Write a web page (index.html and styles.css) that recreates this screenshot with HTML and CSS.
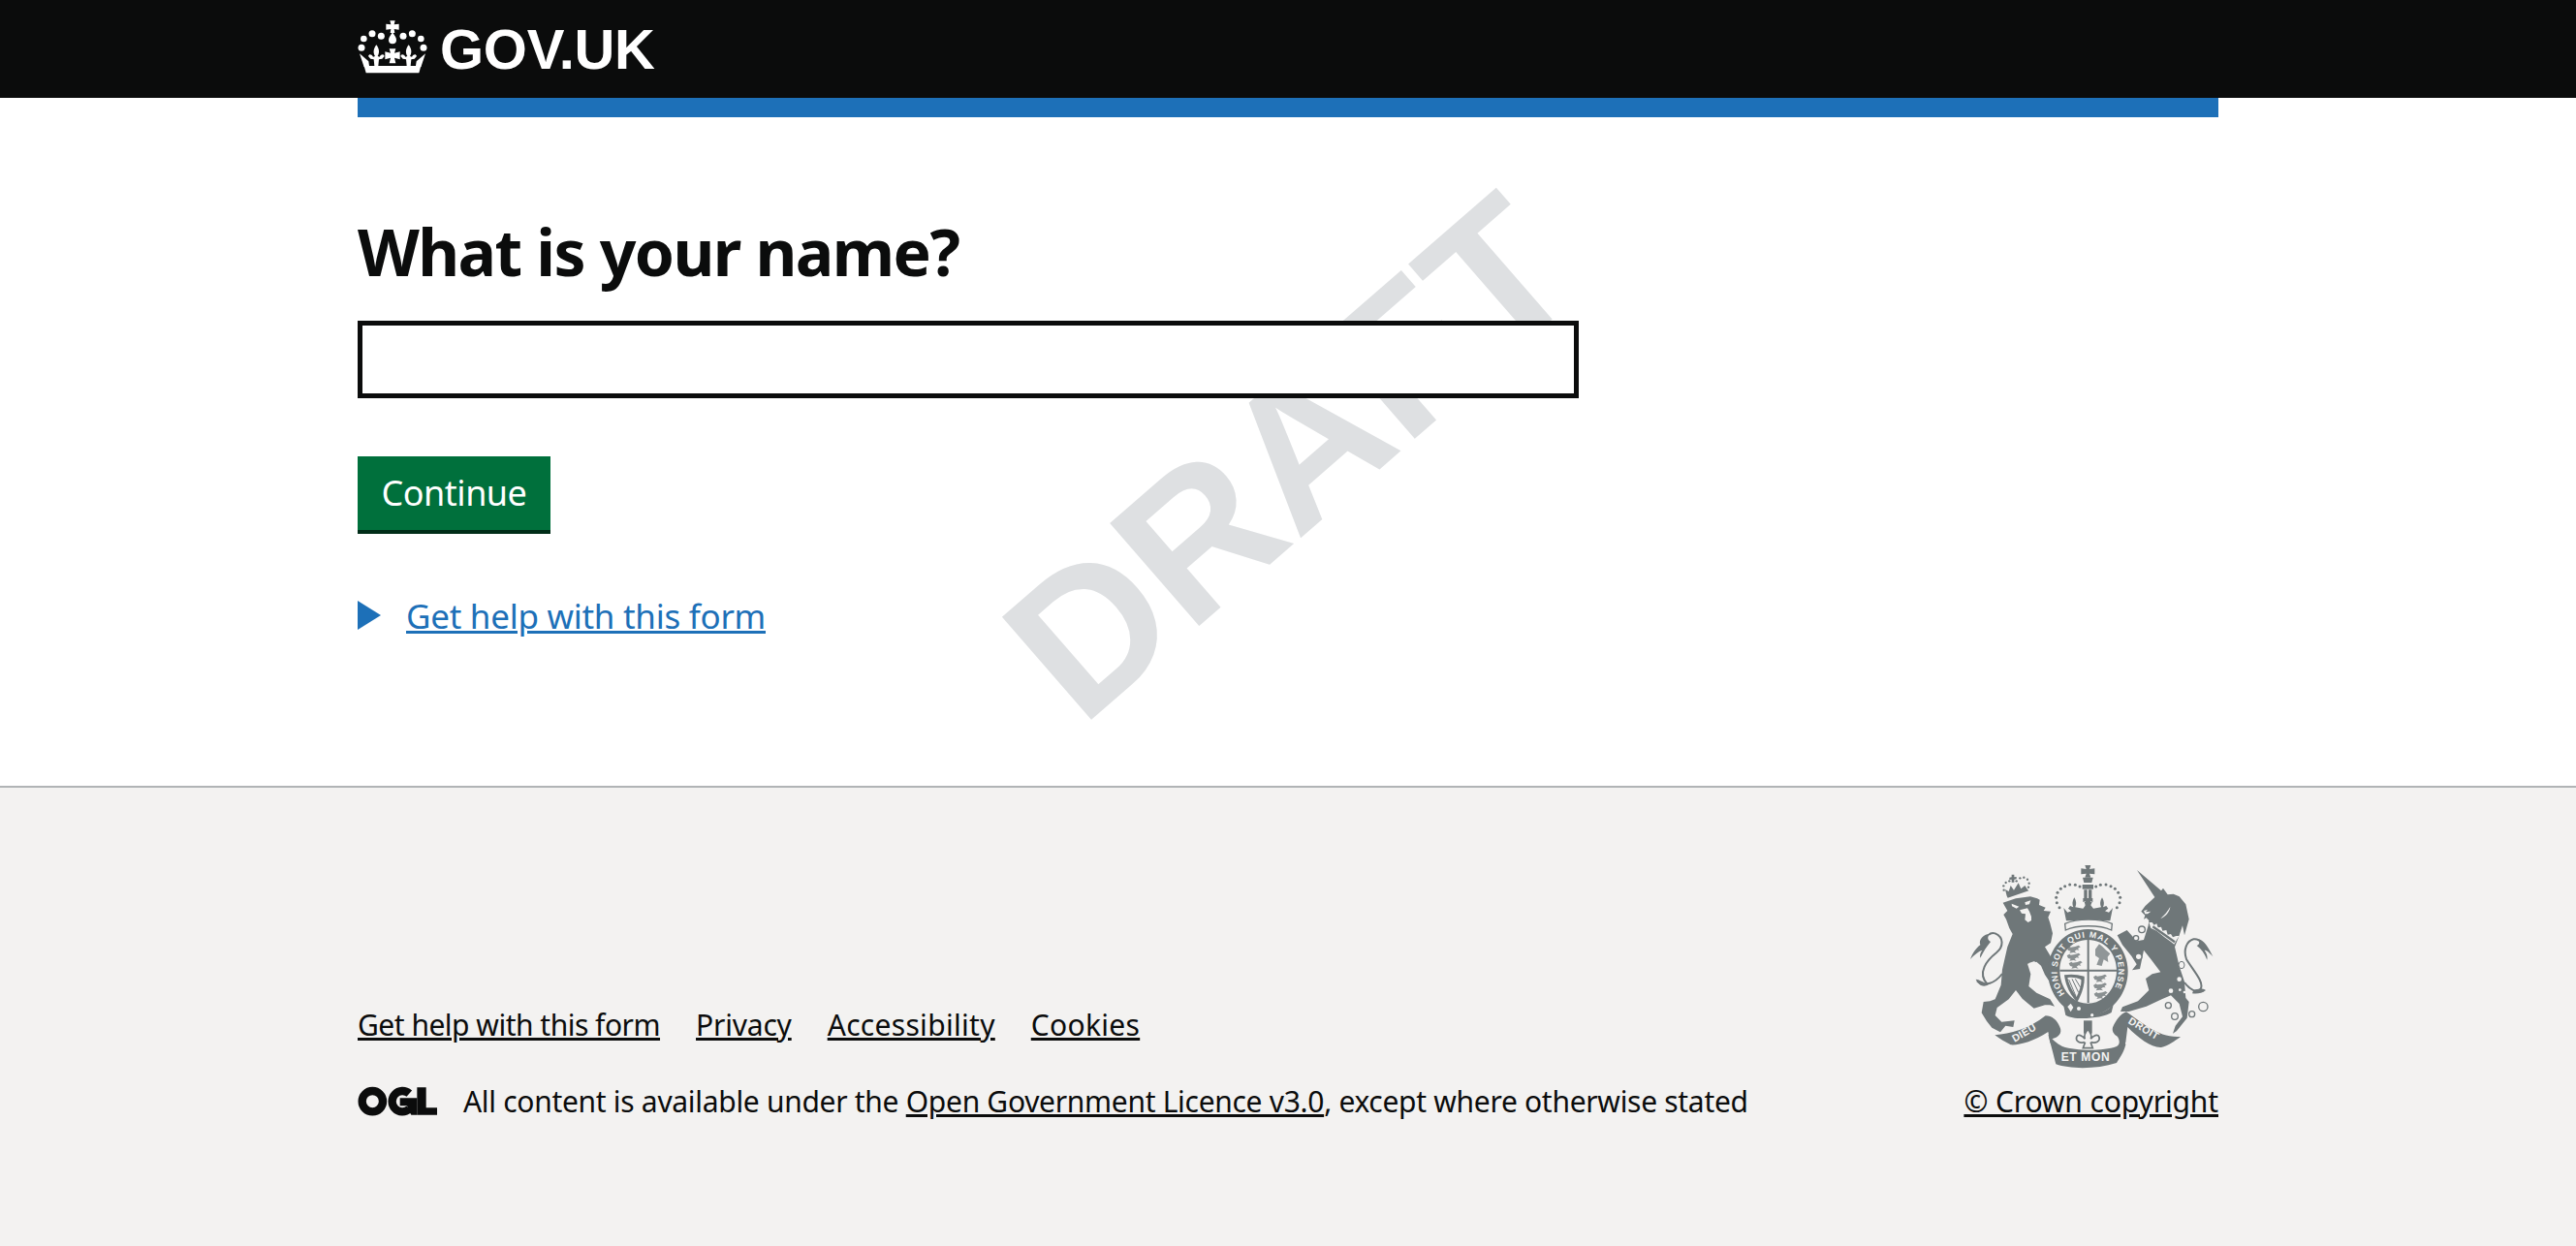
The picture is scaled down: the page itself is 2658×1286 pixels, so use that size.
FILE: index.html
```html
<!DOCTYPE html>
<html lang="en">
<head>
<meta charset="UTF-8" />
<title>What is your name?</title>
<link rel="stylesheet" href="styles.css">
</head>
<body>

<header class="site-header">
  <div class="container header-inner">
    <svg class="crown" viewBox="0 0 240 180" aria-hidden="true">
      <g fill="#fff">
        <circle cx="31" cy="66" r="10"/><circle cx="57" cy="50" r="10.5"/><circle cx="85" cy="58" r="10.5"/>
        <circle cx="153" cy="58" r="10.5"/><circle cx="181" cy="50" r="10.5"/><circle cx="208" cy="66" r="10"/>
        <circle cx="24" cy="94" r="10.5"/><circle cx="216" cy="94" r="10.5"/>
        <path d="M112 10H128L125 22 140 20V38L125 36 127 48H113L115 36 100 38V20L115 22Z"/>
        <path d="M120 46C126 56 132 62 132 70A12 12 0 0 1 108 70C108 62 114 56 120 46Z"/>
        <path d="M110 97H130L126 110 143 106V130L126 125 130 142H110L114 125 97 130V106L114 110Z"/>
        <path id="fleur" d="M70 85C60 98 60 110 66 120L60 122C55 114 48 112 45 120L52 128 62 130 64 150H76L78 130 88 128 95 120C92 112 85 114 80 122L74 120C80 110 80 98 70 85Z"/>
        <use href="#fleur" x="100"/>
        <path d="M38 172H202L208 150H32Z"/>
        <path d="M32 154L18 112 46 136 48 150Z"/>
        <path d="M208 154L222 112 194 136 192 150Z"/>
      </g>
    </svg>
    <span class="wordmark">GOV.UK</span>
  </div>
</header>

<div class="container">
  <div class="blue-bar"></div>
</div>

<main class="container main">
  <div class="draft-mark" aria-hidden="true">DRAFT</div>
  <form class="form">
    <h1 class="title">What is your name?</h1>
    <input class="text-input" type="text" aria-label="What is your name?">
    <button class="btn" type="button">Continue</button>
    <div class="details">
      <span class="details-arrow"></span>
      <a class="details-link" href="#">Get help with this form</a>
    </div>
  </form>
</main>

<footer class="site-footer">
  <div class="container footer-inner">
    <div class="footer-left">
      <ul class="footer-links">
        <li class="link-tight"><a href="#">Get help with this form</a></li>
        <li><a href="#">Privacy</a></li>
        <li class="link-loose"><a href="#">Accessibility</a></li>
        <li class="link-loose"><a href="#">Cookies</a></li>
      </ul>
      <div class="licence">
        <svg class="ogl" viewBox="0 0 270 135" aria-hidden="true">
          <circle cx="58" cy="68" r="32" fill="none" stroke="#0b0c0c" stroke-width="25"/>
          <path d="M172 44A32 32 0 1 0 172 92" fill="none" stroke="#0b0c0c" stroke-width="25"/>
          <path fill="#0b0c0c" d="M143 58H196V110H178L172 100 165 82H143Z"/>
          <path fill="#0b0c0c" d="M196 25H224V88H258V110H196Z"/>
        </svg>
        <span class="licence-text">All content is available under the <a href="#">Open Government Licence v3.0</a>, except where otherwise stated</span>
      </div>
    </div>
    <div class="footer-right">
      <svg class="crest" viewBox="0 0 777 660" aria-hidden="true">
        <defs>
          <path id="garter-ring" d="M92 422A95 105 0 1 1 234 422"/>
          <path id="shield-lion" d="M0 8L8 3 12 6 26 4 36 0 42 5 34 10 38 15 30 14 24 18 30 24 20 22 8 24 12 18 4 16Z"/>
        </defs>

        <!-- lion -->
        <g class="crest-ink" transform="translate(0 15)">
          <g>
            <circle cx="113" cy="86" r="3.5"/><circle cx="112" cy="73" r="3.5"/><circle cx="119" cy="63" r="3.5"/><circle cx="130" cy="58" r="3.5"/>
            <circle cx="152" cy="58" r="3.5"/><circle cx="163" cy="49" r="3.5"/><circle cx="175" cy="47" r="3.5"/><circle cx="186" cy="53" r="3.5"/><circle cx="191" cy="65" r="3.5"/><circle cx="189" cy="77" r="3.5"/>
            <path d="M137 38H145V46L152 45V52L145 53V62H137V53L130 54V47L137 46Z"/>
            <path d="M122 104L117 84 128 90 134 72 144 86 158 64 166 82 178 72 186 84 190 88 125 110Z"/>
          </g>
          <path d="M110 125L150 112 195 106 216 112 224 116 222 132 242 140 236 150 258 152 250 170 256 188 264 220 258 250 240 262 276 322 284 360 272 376 252 366 240 348 228 320 214 308 186 314 196 346 190 384 214 404 256 424 270 446 256 442 240 442 206 452 170 422 150 396 128 424 92 450 86 474 106 494 146 490 142 510 118 506 102 526 76 512 60 492 44 466 50 432 70 430 86 424 104 380 108 332 124 262 140 222 130 204 120 176 112 162 124 150Z"/>
          <path class="crest-cut" d="M137 128L160 137 152 143 138 136ZM178 124L196 118 192 130 180 132ZM162 148L186 142 192 152 198 168 198 180 188 186 178 178 180 160 168 158Z"/>
          <path class="crest-cut" d="M190 312L208 306 214 322 230 330 234 348 222 338 208 334 200 340Z"/>
          <path class="crest-line" d="M108 345C85 375 55 385 30 368"/>
          <path class="crest-line" d="M62 378C28 342 62 302 90 280C112 262 114 232 86 220C76 217 70 220 66 225"/>
          <path d="M72 220C50 224 34 238 40 256 26 266 15 284 9 300 22 286 34 276 46 272 40 280 38 288 40 296 50 276 60 260 72 246 60 240 62 228 72 220Z"/>
          <path d="M26 362C36 362 50 372 66 378 52 388 36 384 26 362Z"/>
        </g>

        <!-- royal crown, garter and shield -->
        <g class="crest-ink" transform="translate(210 0)">
          <path d="M154 24H172L168 36 184 34V52L168 50 172 62H154L158 50 142 52V34L158 36Z"/>
          <path d="M147 62H179L175 78H151Z"/>
          <path d="M151 100H161V130H151ZM165 100H175V130H165Z"/>
          <path d="M146 84H180V98H146Z"/>
          <g>
            <circle cx="138" cy="90" r="4.5"/><circle cx="124" cy="85" r="4.5"/><circle cx="107" cy="84" r="4.5"/><circle cx="92" cy="89" r="4.5"/><circle cx="79" cy="97" r="4.5"/><circle cx="69" cy="109" r="4.5"/><circle cx="65" cy="124" r="4.5"/><circle cx="67" cy="140" r="4.5"/><circle cx="75" cy="155" r="4.5"/>
            <circle cx="188" cy="90" r="4.5"/><circle cx="202" cy="85" r="4.5"/><circle cx="219" cy="84" r="4.5"/><circle cx="234" cy="89" r="4.5"/><circle cx="247" cy="97" r="4.5"/><circle cx="257" cy="109" r="4.5"/><circle cx="263" cy="124" r="4.5"/><circle cx="261" cy="140" r="4.5"/><circle cx="253" cy="155" r="4.5"/>
          </g>
          <path d="M121 124C114 136 114 146 118 154L108 150 102 158 112 166 100 170 88 156 96 196H232L240 156 228 170 216 166 226 158 220 150 210 154C214 146 214 136 207 124 200 136 200 146 204 154L180 158 172 148 176 138H152L156 148 148 158 124 154C128 146 128 136 121 124Z"/>
          <path d="M148 126H178V138L171 136V152H155V136L148 138Z"/>
          <path class="crest-band" d="M92 205C130 188 200 188 238 205L236 225C200 208 130 208 94 225Z"/>

          <path fill-rule="evenodd" d="M163 222C232 222 287 282 287 352 287 424 232 490 163 490 94 490 39 424 39 352 39 282 94 222 163 222ZM163 255C112 255 76 298 76 350 76 400 110 452 163 452 216 452 252 400 252 350 252 298 216 255 163 255Z"/>
          <text class="garter-text"><textPath href="#garter-ring">HONI SOIT QUI MAL Y PENSE</textPath></text>

          <path d="M161 255H167V450H161ZM76 347H252V353H76Z"/>
          <g fill-opacity=".8">
            <use href="#shield-lion" x="98" y="272"/><use href="#shield-lion" x="98" y="296"/><use href="#shield-lion" x="104" y="320"/>
            <use href="#shield-lion" x="180" y="362"/><use href="#shield-lion" x="180" y="388"/><use href="#shield-lion" x="182" y="414"/>
          </g>
          <path d="M186 284L198 268 208 276 218 286 232 298 224 308 226 324 212 316 206 336 190 332 198 312 186 304Z" fill-opacity=".75"/>
          <path d="M90 364C110 360 130 362 152 368 154 400 140 430 130 448 112 430 94 400 90 364Z"/>
          <path class="crest-cut" d="M100 372C116 370 128 372 142 378 144 394 136 414 128 432 114 412 104 392 100 372Z"/>
          <path d="M104 378L126 430M114 376L134 418M124 376L140 402" stroke="#6f7779" stroke-width="3" fill="none"/>
          <path d="M88 460C110 470 130 484 176 486 206 484 224 474 242 456L236 480C210 498 120 506 94 488Z"/>
          <circle class="crest-cut" cx="135" cy="468" r="6"/><circle class="crest-cut" cx="176" cy="488" r="5"/>
          <path class="crest-cut" d="M100 462L110 452 118 464 110 478Z"/>
          <!-- fleur under the shield -->
          <path d="M150 505H176V545H150Z"/>
          <path class="crest-outline" d="M163 532C172 542 176 552 172 562 180 550 194 546 198 556 202 570 186 576 176 572L172 574 178 590H148L154 574 150 572C140 576 124 570 128 556 132 546 146 550 154 562 150 552 154 542 163 532Z"/>
        </g>

        <!-- unicorn -->
        <g class="crest-ink" transform="translate(450 15)">
          <path d="M75 24L150 88 156 80 170 100 188 98 206 106 226 130 236 176 222 226 216 196 204 232 192 262 206 322 222 370 226 420 236 432 230 482 198 522 186 530 194 506 216 478 206 438 180 412 152 424 104 446 50 462 24 462 30 448 78 430 112 396 102 360 122 346 148 340 118 300 96 272 84 330 60 334 74 316 58 290 30 256 14 226 44 210 74 244 96 240 110 196 112 180 104 172 96 176 100 164 88 152 100 136 130 108Z"/>
          <path class="crest-cut" d="M178 138C176 154 164 168 148 174 160 164 170 152 178 138Z"/>
          <path class="crest-cut" d="M96 150L108 146 102 154 118 152 108 160 100 160Z"/>
          <path class="crest-cut" d="M112 186L122 186 128 194 136 190 140 202 150 200 154 212 166 210 170 224 180 222 186 232 196 228 206 228 198 240 190 254 180 246 160 232 136 212 118 204Z"/>
          <path d="M126 196L194 244 190 250 122 202Z"/>
          <circle class="crest-cut" cx="206" cy="362" r="7"/><circle class="crest-cut" cx="180" cy="398" r="7"/><circle class="crest-cut" cx="208" cy="395" r="4"/><circle class="crest-cut" cx="222" cy="402" r="4"/>
          <ellipse class="crest-ring-cut" cx="213" cy="318" rx="9" ry="11"/>
          <path class="crest-line" d="M222 372C240 396 258 404 272 392 284 372 250 336 228 300 218 272 228 244 250 238 260 236 268 240 276 250"/>
          <path d="M262 236C282 240 296 262 310 292 296 276 290 272 284 272 292 284 294 292 292 302 284 282 274 268 260 258 270 254 270 244 262 236Z"/>
          <path d="M250 396C262 392 276 388 288 396 276 406 262 408 246 406Z"/>
          <g class="crest-rings">
            <circle cx="90" cy="208" r="10"/><circle cx="72" cy="235" r="8"/><circle cx="80" cy="292" r="10"/>
            <circle cx="172" cy="443" r="9"/><circle cx="192" cy="477" r="10"/><circle cx="245" cy="470" r="9"/><circle cx="280" cy="447" r="14"/>
          </g>
        </g>

        <!-- motto ribbon -->
        <g class="crest-ink">
          <path d="M85 550C132 546 190 532 242 490 262 490 278 504 286 524 296 546 280 556 262 562 256 572 262 590 270 600L256 572 250 540C204 570 160 582 134 580 118 572 100 562 85 550Z"/>
          <path d="M250 548C262 562 276 576 294 585 340 600 420 600 462 585 476 578 472 560 454 540 476 548 488 564 490 580 482 610 470 622 462 636 400 656 320 656 274 640 268 616 258 578 250 548Z"/>
          <path d="M660 555C590 560 540 510 492 478 474 484 460 504 450 526 446 540 456 552 472 558 484 566 480 580 476 592L490 572 496 525C530 560 570 590 600 588 622 584 642 568 660 555Z"/>
          <text class="motto" x="146" y="572" transform="rotate(-30 146 572)">DIEU</text>
          <text class="motto motto-mid" x="290" y="630">ET MON</text>
          <text class="motto" x="496" y="512" transform="rotate(31 496 512)">DROIT</text>
        </g>
      </svg>
      <a class="copyright" href="#">© Crown copyright</a>
    </div>
  </div>
</footer>

</body>
</html>
```

FILE: styles.css
```css
/* Base */
body {
  margin: 0;
  min-height: 100vh;
  display: flex;
  flex-direction: column;
  background: #fff;
  color: #0b0c0c;
  font-family: "Noto Sans", "Open Sans", sans-serif;
  overflow-x: hidden;
}

.container {
  width: 1920px;
  margin: 0 auto;
}

/* Header */
.site-header {
  background: #0b0c0c;
  height: 101px;
  overflow: hidden;
}

.header-inner {
  display: flex;
  align-items: center;
  height: 101px;
}

.crown {
  width: 80px;
  height: 60px;
  margin: -5px 9px 0 -4px;
}

.wordmark {
  color: #fff;
  font-family: "Liberation Sans", Arial, sans-serif;
  font-weight: 700;
  font-size: 58px;
  line-height: 1;
  letter-spacing: -0.3px;
}

.blue-bar {
  height: 20px;
  background: #1d70b8;
}

/* Main */
.main {
  position: relative;
  flex: none;
  height: 690px;
  box-sizing: border-box;
}

.form {
  position: relative;
  display: flex;
  flex-direction: column;
  align-items: flex-start;
  padding-top: 96px;
}

.title {
  margin: 0 0 30px;
  font-size: 66px;
  line-height: 84px;
  font-weight: 700;
  letter-spacing: -1.55px;
}

.text-input {
  width: 1260px;
  height: 80px;
  box-sizing: border-box;
  border: 5px solid #0b0c0c;
  background: #fff;
  border-radius: 0;
  padding: 0;
  margin-bottom: 60px;
}

.btn {
  width: 199px;
  height: 76px;
  border: none;
  border-radius: 0;
  background: #00703c;
  box-shadow: 0 4px 0 #002d18;
  color: #fff;
  font: inherit;
  font-size: 36px;
  letter-spacing: -0.5px;
  padding: 0 0 2px;
  margin-bottom: 64px;
}

.details {
  display: flex;
  align-items: center;
  gap: 25px;
}

.details-arrow {
  width: 0;
  height: 0;
  border-left: 24px solid #1d70b8;
  border-top: 15px solid transparent;
  border-bottom: 15px solid transparent;
}

.details-link {
  color: #1d70b8;
  font-size: 35px;
  letter-spacing: -0.28px;
  padding-top: 1px;
  margin-left: 1px;
}

/* Watermark sits behind the form */
.draft-mark {
  position: absolute;
  left: 743px;
  top: 448px;
  color: #dee0e2;
  font-family: "Liberation Sans", Arial, sans-serif;
  font-weight: 700;
  font-size: 204px;
  line-height: 1;
  white-space: nowrap;
  transform-origin: 14.9px 172.7px;
  transform: rotate(-41deg);
}

/* Footer */
.site-footer {
  flex: 1;
  background: #f3f2f1;
  border-top: 2px solid #b1b4b6;
}

.footer-inner {
  display: flex;
  justify-content: space-between;
  align-items: flex-start;
  padding-top: 72px;
}

.footer-left {
  padding-top: 152px;
}

.footer-links {
  display: flex;
  gap: 37px;
  list-style: none;
  margin: 0 0 36px;
  padding: 0;
  font-size: 30px;
  letter-spacing: -0.2px;
}

.link-tight {
  letter-spacing: -0.5px;
}

.link-loose {
  letter-spacing: 0.3px;
}

.site-footer a {
  color: #0b0c0c;
}

.licence {
  display: flex;
  align-items: center;
  font-size: 30px;
  letter-spacing: -0.3px;
}

.ogl {
  width: 90px;
  height: 45px;
  margin: 0 23px 0 -4px;
}

.footer-right {
  display: flex;
  flex-direction: column;
  align-items: flex-end;
}

/* Crest */
.crest {
  width: 259px;
  height: 220px;
  margin-bottom: 11px;
}

.crest-ink {
  fill: #6f7779;
}

.crest-cut {
  fill: #f3f2f1;
}

.crest-line {
  fill: none;
  stroke: #6f7779;
  stroke-width: 6;
}

.crest-band {
  fill: #f3f2f1;
  stroke: #6f7779;
  stroke-width: 4;
}

.crest-outline {
  fill: #f3f2f1;
  stroke: #6f7779;
  stroke-width: 5;
}

.crest-ring-cut {
  fill: #f3f2f1;
  stroke: #6f7779;
  stroke-width: 3;
}

.crest-rings circle {
  fill: #f3f2f1;
  stroke: #6f7779;
  stroke-width: 4;
}

.garter-text,
.motto {
  fill: #f3f2f1;
  font-family: "Liberation Sans", Arial, sans-serif;
  font-weight: 700;
}

.garter-text {
  font-size: 26px;
  letter-spacing: 3px;
}

.motto {
  font-size: 32px;
  letter-spacing: 1px;
}

.motto-mid {
  font-size: 36px;
  letter-spacing: 2px;
}

.copyright {
  font-size: 30px;
  letter-spacing: -0.12px;
}
```
